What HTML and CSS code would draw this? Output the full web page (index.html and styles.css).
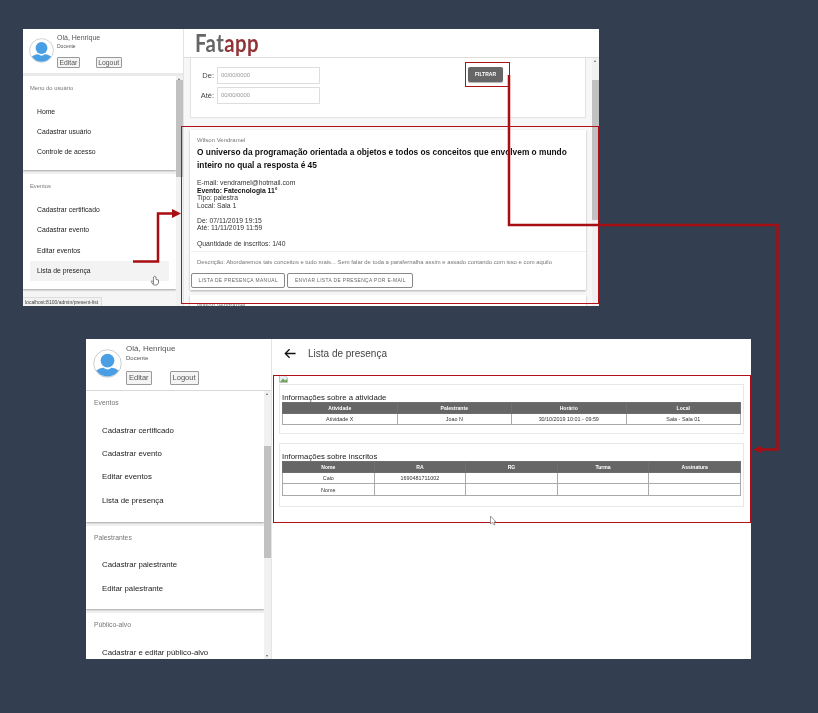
FILE: index.html
```html
<!DOCTYPE html>
<html lang="pt-BR">
<head>
    <meta charset="UTF-8">
    <meta name="viewport" content="width=device-width, initial-scale=1.0">
    <title>Lista de presença</title>
    <link rel="stylesheet" href="styles.css">
</head>
<body>
    <!-- first screen: event list -->
    <div class="window window-top">
        <div class="side side-top">
            <div class="profile">
                <svg class="avatar" viewBox="0 0 40 40">
                    <defs><clipPath id="clipTop"><circle cx="20" cy="20" r="18"/></clipPath></defs>
                    <circle cx="20" cy="20" r="19" fill="#fff" stroke="#b9b9b9" stroke-width="1"/>
                    <g clip-path="url(#clipTop)" fill="#4a9fe4">
                        <circle cx="20" cy="16" r="9.5"/>
                        <path d="M2 40 V32 C7 27 12 26 15 26 C18 29 22 29 25 26 C28 26 33 27 38 32 V40 Z"/>
                    </g>
                </svg>
                <div class="who">
                    <div class="who-name">Olá, Henrique</div>
                    <div class="who-role">Docente</div>
                    <div class="who-btns">
                        <span class="small-btn">Editar</span>
                        <span class="small-btn">Logout</span>
                    </div>
                </div>
            </div>
            <div class="side-body">
                <div class="menus">
                    <div class="menu-card">
                        <div class="menu-title">Menu do usuário</div>
                        <div class="menu-item">Home</div>
                        <div class="menu-item">Cadastrar usuário</div>
                        <div class="menu-item">Controle de acesso</div>
                    </div>
                    <div class="menu-card">
                        <div class="menu-title">Eventos</div>
                        <div class="menu-item">Cadastrar certificado</div>
                        <div class="menu-item">Cadastrar evento</div>
                        <div class="menu-item">Editar eventos</div>
                        <div class="menu-item menu-item-hover">Lista de presença</div>
                    </div>
                </div>
                <div class="scrollbar"><div class="thumb thumb-side-top"></div></div>
            </div>
            <div class="status-url">localhost:8100/admin/present-list</div>
        </div>

        <div class="main-top">
            <div class="logo-bar"><span class="logo">Fat<span class="logo-app">app</span></span></div>
            <div class="main-body">
                <div class="cards">
                    <div class="filter-card">
                        <div class="filter-fields">
                            <div class="field"><label>De:</label><span class="date-input">00/00/0000</span></div>
                            <div class="field"><label>Até:</label><span class="date-input">00/00/0000</span></div>
                        </div>
                        <span class="filter-btn">FILTRAR</span>
                    </div>
                    <div class="event-card">
                        <div class="event-author">Wilson Vendramel</div>
                        <div class="event-title">O universo da programação orientada a objetos e todos os conceitos que envolvem o mundo inteiro no qual a resposta é 45</div>
                        <div class="event-info">
                            E-mail: vendramel@hotmail.com<br>
                            <b>Evento: Fatecnologia 11°</b><br>
                            Tipo: palestra<br>
                            Local: Sala 1
                        </div>
                        <div class="event-info">
                            De: 07/11/2019 19:15<br>
                            Até: 11/11/2019 11:59
                        </div>
                        <div class="event-info">Quantidade de inscritos: 1/40</div>
                        <div class="event-desc">Descrição: Abordaremos tais conceitos e tudo mais... Sem falar de toda a parafernalha assim e assado contando com isso e com aquilo</div>
                        <div class="event-btns">
                            <span class="outline-btn">LISTA DE PRESENÇA MANUAL</span>
                            <span class="outline-btn">ENVIAR LISTA DE PRESENÇA POR E-MAIL</span>
                        </div>
                    </div>
                    <div class="event-card">
                        <div class="event-author">Wilson Vendramel</div>
                    </div>
                </div>
                <div class="scrollbar"><div class="thumb thumb-main-top"></div></div>
            </div>
        </div>
    </div>

    <!-- second screen: attendance list -->
    <div class="window window-bottom">
        <div class="side side-bottom">
            <div class="profile">
                <svg class="avatar" viewBox="0 0 40 40">
                    <defs><clipPath id="clipBottom"><circle cx="20" cy="20" r="18"/></clipPath></defs>
                    <circle cx="20" cy="20" r="19" fill="#fff" stroke="#b9b9b9" stroke-width="1"/>
                    <g clip-path="url(#clipBottom)" fill="#4a9fe4">
                        <circle cx="20" cy="16" r="9.5"/>
                        <path d="M2 40 V32 C7 27 12 26 15 26 C18 29 22 29 25 26 C28 26 33 27 38 32 V40 Z"/>
                    </g>
                </svg>
                <div class="who">
                    <div class="who-name">Olá, Henrique</div>
                    <div class="who-role">Docente</div>
                    <div class="who-btns">
                        <span class="small-btn">Editar</span>
                        <span class="small-btn">Logout</span>
                    </div>
                </div>
            </div>
            <div class="side-body">
                <div class="menus">
                    <div class="menu-card">
                        <div class="menu-title">Eventos</div>
                        <div class="menu-item">Cadastrar certificado</div>
                        <div class="menu-item">Cadastrar evento</div>
                        <div class="menu-item">Editar eventos</div>
                        <div class="menu-item">Lista de presença</div>
                    </div>
                    <div class="menu-card">
                        <div class="menu-title">Palestrantes</div>
                        <div class="menu-item">Cadastrar palestrante</div>
                        <div class="menu-item">Editar palestrante</div>
                    </div>
                    <div class="menu-card">
                        <div class="menu-title">Público-alvo</div>
                        <div class="menu-item">Cadastrar e editar público-alvo</div>
                    </div>
                </div>
                <div class="scrollbar scrollbar-end"><div class="thumb thumb-side-bottom"></div></div>
            </div>
        </div>

        <div class="main-bottom">
            <div class="page-head">
                <svg class="back-arrow" viewBox="0 0 14 12">
                    <path d="M13.5 6 H1.5 M6.5 1 L1.5 6 L6.5 11" fill="none" stroke="#111" stroke-width="1.5"/>
                </svg>
                <span class="page-title">Lista de presença</span>
            </div>
            <div class="report">
                <svg class="broken-img" viewBox="0 0 9 8">
                    <path d="M0.5 0.5 H6 L8.5 3 V7.5 H0.5 Z" fill="#e8eef6" stroke="#9a9a9a" stroke-width="0.6"/>
                    <path d="M1 7 L4 3.5 L6 5.5 L8 4 V7 Z" fill="#6fa45c"/>
                </svg>
                <div class="report-box report-box-first">
                    <div class="report-title">Informações sobre a atividade</div>
                    <table class="report-table">
                        <tr><th>Atividade</th><th>Palestrante</th><th>Horário</th><th>Local</th></tr>
                        <tr><td>Atividade X</td><td>Joao N</td><td>30/10/2019 10:01 - 09:59</td><td>Sala - Sala 01</td></tr>
                    </table>
                </div>
                <div class="report-box">
                    <div class="report-title">Informações sobre inscritos</div>
                    <table class="report-table">
                        <tr><th>Nome</th><th>RA</th><th>RG</th><th>Turma</th><th>Assinatura</th></tr>
                        <tr><td>Caio</td><td>1690481711002</td><td></td><td></td><td></td></tr>
                        <tr><td>Nome</td><td></td><td></td><td></td><td></td></tr>
                    </table>
                </div>
            </div>
        </div>
    </div>

    <!-- annotations drawn over both screens -->
    <svg class="notes" viewBox="0 0 818 713">
        <g fill="none" stroke="#b01116" stroke-width="1">
            <rect x="181.5" y="126.5" width="417" height="177"/>
            <rect x="465.5" y="62.5" width="44" height="24"/>
            <rect x="273.5" y="375.5" width="477" height="147"/>
        </g>
        <g fill="none" stroke="#a80d12" stroke-width="2.5">
            <path d="M133 261.5 H158 V213.5 H172"/>
            <path d="M509 75 V225 H777.5 V449.5 H760"/>
        </g>
        <g fill="#a80d12">
            <path d="M172 209 L181 213.5 L172 218 Z"/>
            <path d="M762 445.5 L753 449.5 L762 453.5 Z"/>
        </g>
        <!-- hand cursor -->
        <path d="M153.5 284 L153.5 277 Q155 275.5 156 277 L156 279.5 L158.5 280 L158.5 283 L157 285 L153.5 285 L151 281.5 Q151.5 280.5 153 281.5" fill="#fff" stroke="#555" stroke-width="0.7"/>
        <!-- arrow cursor -->
        <path d="M490.5 516 L490.5 524 L492.5 522.5 L494 525 L495 524.5 L494 522 L496 522 Z" fill="#fff" stroke="#777" stroke-width="0.7"/>
    </svg>
</body>
</html>
```

FILE: styles.css
```css
html, body {
    margin: 0;
    padding: 0;
}

body {
    width: 818px;
    height: 713px;
    overflow: hidden;
    position: relative;
    background-color: #333f50;
    font-family: "Liberation Sans", Arial, sans-serif;
    color: #333;
}

/* the screenshots are pasted into a slide, so they are a bit soft */
.window {
    position: absolute;
    display: flex;
    overflow: hidden;
    background-color: #fff;
    filter: blur(0.5px);
}

.window-top {
    left: 23px;
    top: 29px;
    width: 576px;
    height: 277px;
}

.window-bottom {
    left: 86px;
    top: 339px;
    width: 665px;
    height: 320px;
}

.notes {
    position: absolute;
    left: 0;
    top: 0;
    width: 818px;
    height: 713px;
    pointer-events: none;
}

/* sidebar */
.side {
    position: relative;
    display: flex;
    flex-direction: column;
    flex: none;
    box-sizing: border-box;
    border-right: 1px solid #e4e4e4;
}

.side-top { width: 161px; }
.side-bottom { width: 186px; }

.profile {
    display: flex;
    flex: none;
    box-sizing: border-box;
}

.side-top .profile {
    height: 47px;
    padding: 4px 0 0 6px;
    gap: 3px;
    border-bottom: 3px solid #eaeaea;
}

.side-bottom .profile {
    height: 52px;
    padding: 5px 0 0 7px;
    gap: 4px;
    border-bottom: 1px solid #d8d8d8;
}

.avatar { flex: none; }
.side-top .avatar { width: 25px; height: 25px; margin-top: 5px; }
.side-bottom .avatar { width: 29px; height: 29px; margin-top: 5px; }

.who-name { color: #555; }
.who-role { color: #555; }
.side-top .who-name { font-size: 7px; line-height: 9px; }
.side-top .who-role { font-size: 5px; line-height: 8px; }
.side-bottom .who-name { font-size: 8px; line-height: 10px; }
.side-bottom .who-role { font-size: 6px; line-height: 9px; }

.who-btns { display: flex; }
.side-top .who-btns { gap: 16px; margin-top: 7px; }
.side-bottom .who-btns { gap: 18px; margin-top: 8px; }

.small-btn {
    box-sizing: border-box;
    border: 1px solid #999;
    border-radius: 1px;
    background-color: #f4f4f4;
    color: #555;
    text-align: center;
}

.side-top .small-btn { font-size: 6.8px; line-height: 9px; padding: 0 1.5px; }
.side-bottom .small-btn { font-size: 7.5px; line-height: 12px; padding: 0 2px; }

.side-body {
    display: flex;
    flex: 1;
    min-height: 0;
}

.menus {
    flex: 1;
    min-width: 0;
    overflow: hidden;
    background-color: #f5f5f5;
}

.menu-card {
    background-color: #fff;
    box-shadow: 0 1px 2px rgba(0, 0, 0, 0.35);
}

.side-top .menu-card { margin-bottom: 4px; padding: 8px 7px 7.7px; }
.side-bottom .menu-card { margin-bottom: 4px; padding: 7px 0 9.5px; }

.menu-title { color: #777; }
.side-top .menu-title { font-size: 5.8px; line-height: 8px; margin-bottom: 9.8px; }
.side-bottom .menu-title { font-size: 6.8px; line-height: 9px; margin: 0 0 11.5px 8px; }

.menu-item { color: #222; }
.side-top .menu-item { font-size: 6.8px; line-height: 20.3px; padding-left: 7px; }
.side-bottom .menu-item { font-size: 7.8px; line-height: 23.4px; padding-left: 16px; }

.menu-item-hover {
    background-color: #f3f3f3;
}

.status-url {
    position: absolute;
    left: 0;
    bottom: 0;
    padding: 0 3px 0 2px;
    font-size: 5px;
    line-height: 8px;
    color: #444;
    background-color: #f2f2f2;
    border: 1px solid #ddd;
    border-bottom: 0;
    border-left: 0;
}

.scrollbar {
    position: relative;
    flex: none;
    width: 7px;
    background-color: #f1f1f1;
}

/* little scrollbar arrows */
.scrollbar::before,
.scrollbar-end::after {
    content: "";
    position: absolute;
    left: 2px;
    border-left: 1.5px solid transparent;
    border-right: 1.5px solid transparent;
}

.scrollbar::before {
    top: 2px;
    border-bottom: 2px solid #666;
}

.scrollbar-end::after {
    bottom: 2px;
    border-top: 2px solid #666;
}

.thumb {
    width: 100%;
    background-color: #c1c1c1;
}

.thumb-side-top { height: 97px; margin-top: 4px; }
.thumb-main-top { height: 140px; margin-top: 22px; }
.thumb-side-bottom { height: 112px; margin-top: 55px; }

/* top screen main */
.main-top {
    display: flex;
    flex-direction: column;
    flex: 1;
    min-width: 0;
}

.logo-bar {
    flex: none;
    height: 29px;
    box-sizing: border-box;
    padding-left: 11px;
    border-bottom: 1px solid #ddd;
}

.logo {
    display: inline-block;
    font-family: "Lato", sans-serif;
    font-size: 24px;
    line-height: 27px;
    font-weight: 700;
    color: #666;
    letter-spacing: 0.5px;
    transform: scaleX(0.85);
    transform-origin: left center;
}

.logo-app { color: #923338; }

.main-body {
    display: flex;
    flex: 1;
    min-height: 0;
}

.cards {
    flex: 1;
    min-width: 0;
    overflow: hidden;
    box-sizing: border-box;
    padding: 0 6px;
    background-color: #f7f7f7;
}

.filter-card {
    display: flex;
    box-sizing: border-box;
    height: 60px;
    padding: 9px 0 0 6px;
    background-color: #fff;
    border: 1px solid #e3e3e3;
    border-top: 0;
}

.filter-fields { width: 271px; }

.field {
    display: flex;
    align-items: center;
    height: 17px;
    margin-bottom: 3px;
    font-size: 7.5px;
    color: #444;
}

.field label {
    width: 17px;
    text-align: right;
    margin-right: 3px;
}

.date-input {
    box-sizing: border-box;
    width: 103px;
    height: 17px;
    line-height: 15px;
    padding-left: 3px;
    border: 1px solid #ddd;
    font-size: 5.8px;
    color: #999;
}

.filter-btn {
    width: 35px;
    height: 15px;
    line-height: 15px;
    text-align: center;
    border-radius: 2px;
    background-color: #666;
    color: #fff;
    font-size: 5px;
    font-weight: bold;
    box-shadow: 0 1px 1px rgba(0, 0, 0, 0.3);
}

.event-card {
    margin-top: 12px;
    padding: 6px 0 2px 1px;
    background-color: #fff;
    box-shadow: 0 1px 2px rgba(0, 0, 0, 0.3);
}

.event-card + .event-card { margin-top: 5px; }

.event-author {
    padding-left: 6px;
    font-size: 6px;
    line-height: 8px;
    color: #777;
}

.event-title {
    padding: 2px 10px 0 6px;
    font-size: 8.33px;
    line-height: 13px;
    font-weight: bold;
    color: #111;
}

.event-info {
    padding: 0 6px;
    margin-top: 7.5px;
    font-size: 6.8px;
    line-height: 7.6px;
    color: #333;
}

.event-info b { color: #111; }

.event-title + .event-info { margin-top: 7px; }

.event-desc {
    margin-top: 4px;
    padding: 6px 6px 0;
    border-top: 1px solid #eee;
    font-size: 5.9px;
    line-height: 8px;
    color: #777;
}

.event-btns {
    display: flex;
    gap: 2px;
    margin-top: 7px;
}

.outline-btn {
    box-sizing: border-box;
    height: 15px;
    line-height: 13px;
    padding: 0 6.5px;
    border: 1px solid #888;
    border-radius: 2px;
    font-size: 4.9px;
    letter-spacing: 0.36px;
    color: #666;
}

/* bottom screen main */
.main-bottom {
    flex: 1;
    min-width: 0;
}

.page-head {
    display: flex;
    align-items: center;
    height: 28px;
    padding-left: 12px;
    gap: 12px;
}

.back-arrow { width: 12px; height: 11px; }

.page-title {
    font-size: 10px;
    color: #444;
}

.report {
    position: relative;
    padding: 17px 7px 0;
}

.broken-img {
    position: absolute;
    left: 7px;
    top: 8px;
    width: 9px;
    height: 8px;
}

.report-box {
    box-sizing: border-box;
    padding: 8px 2px 10px;
    border: 1px solid #e8e8e8;
    margin-bottom: 9px;
}

.report-box-first { height: 50px; }

.report-title {
    font-size: 7.8px;
    line-height: 9px;
    color: #222;
}

.report-table {
    width: 100%;
    table-layout: fixed;
    border-collapse: collapse;
}

.report-table th {
    height: 10px;
    padding: 0;
    line-height: 8px;
    background-color: #666;
    border: 1px solid #6e6e6e;
    color: #fff;
    font-size: 5.1px;
    font-weight: bold;
}

.report-table td {
    height: 10.4px;
    padding: 0;
    line-height: 8px;
    border: 1px solid #aaa;
    text-align: center;
    font-size: 5.4px;
    color: #333;
}
```
